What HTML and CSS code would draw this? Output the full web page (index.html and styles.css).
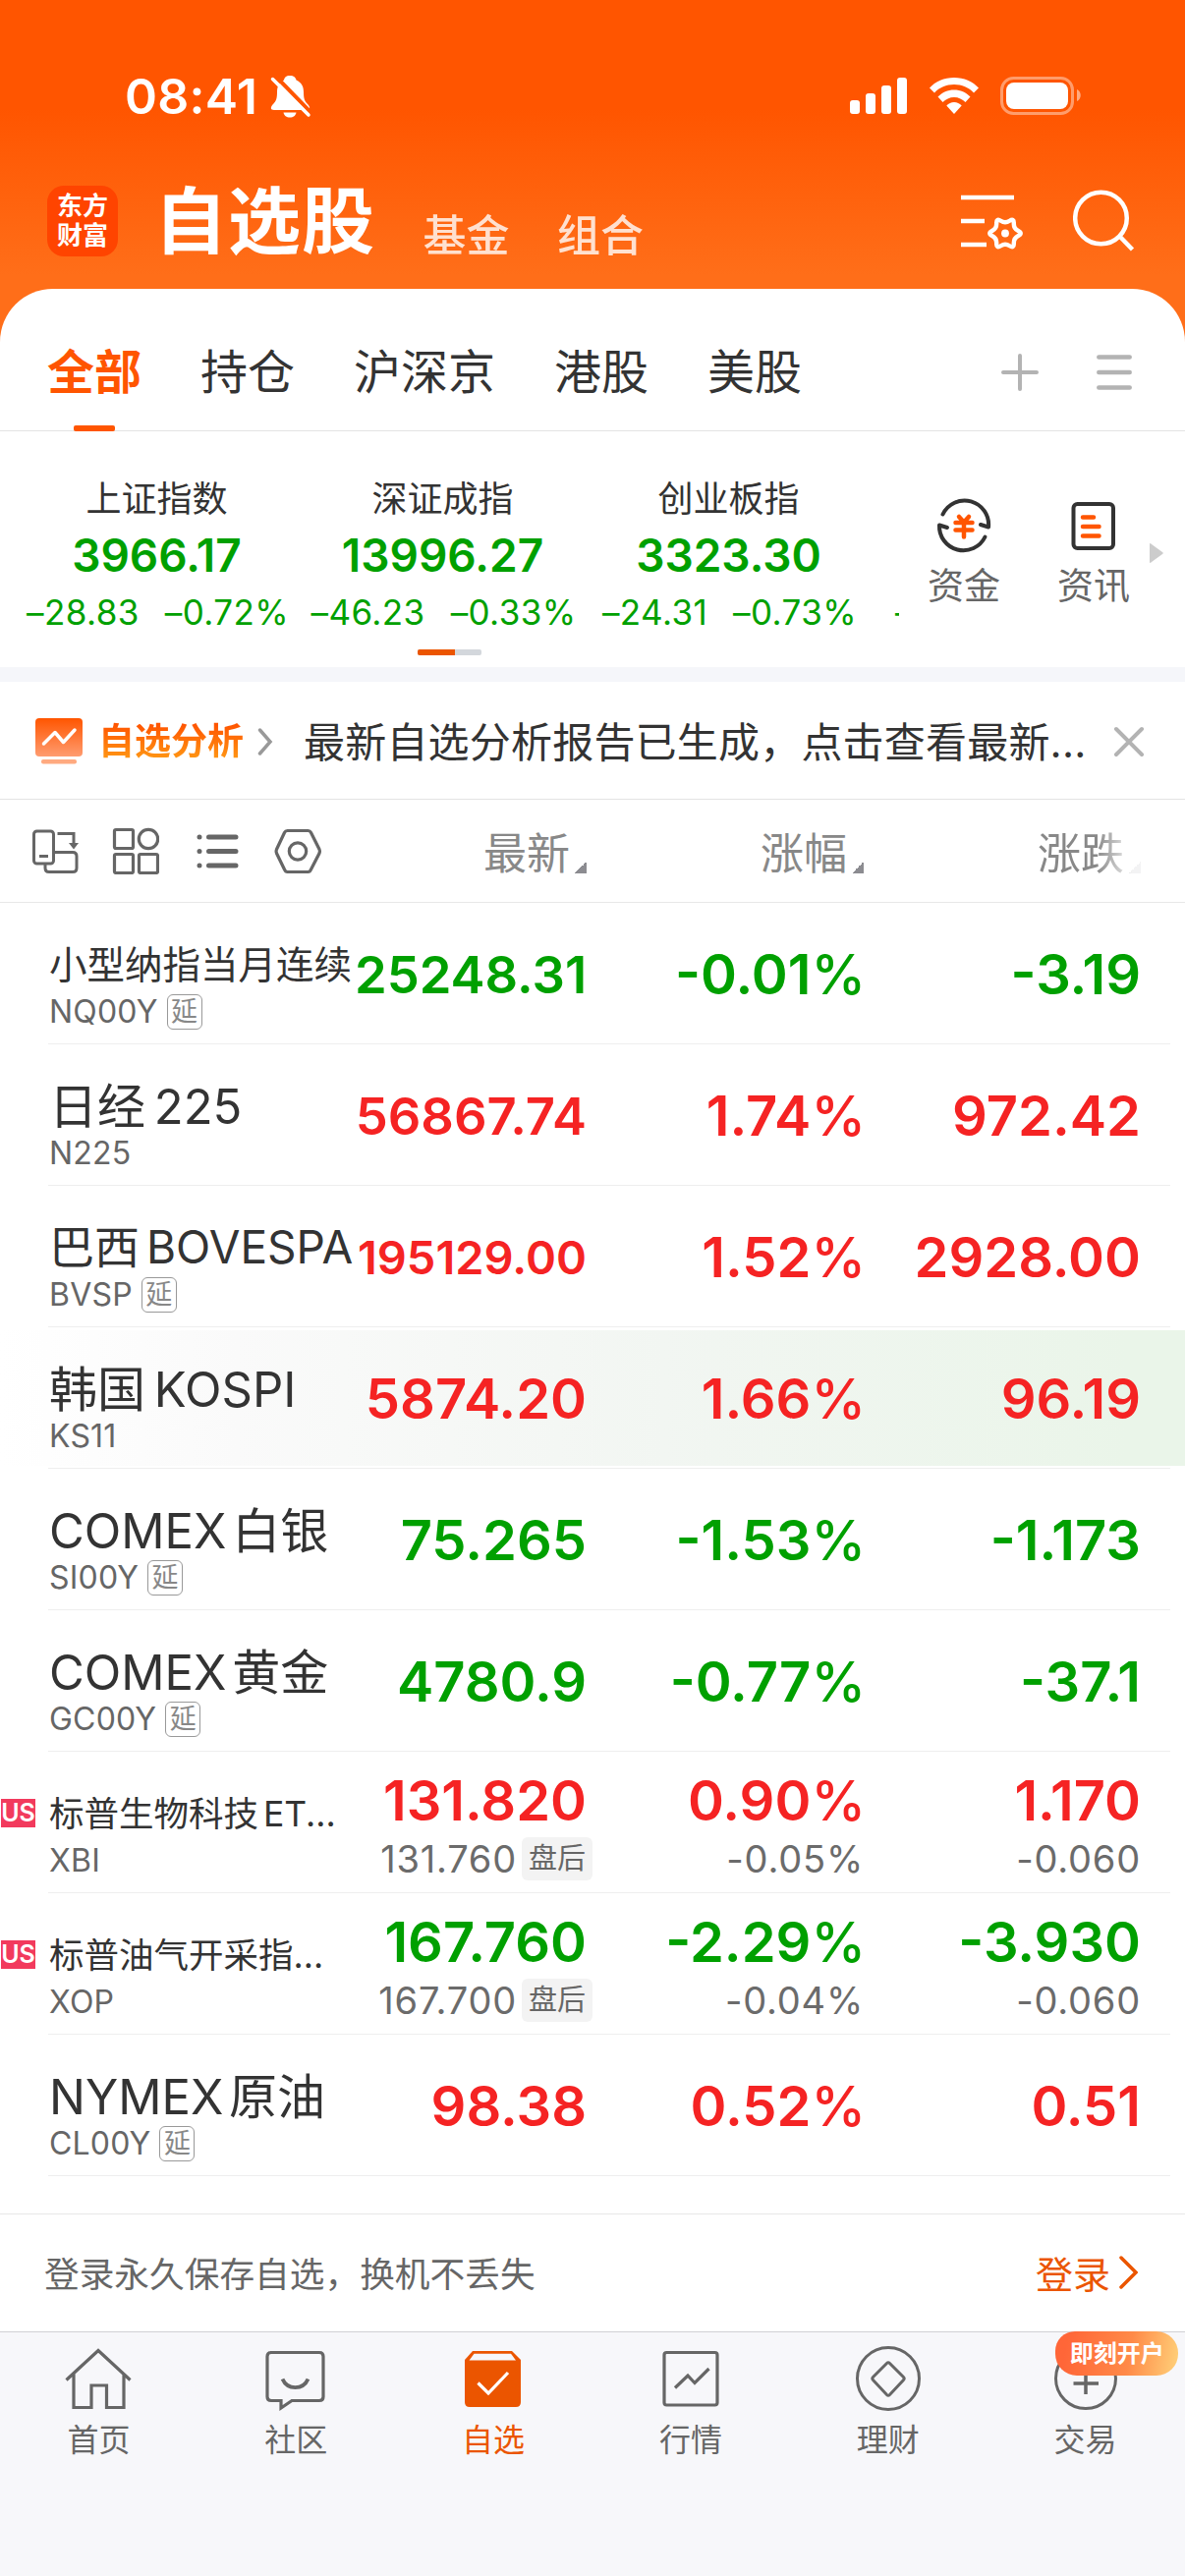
FILE: index.html
```html
<!DOCTYPE html>
<html lang="zh-CN">
<head>
    <meta charset="UTF-8">
    <meta name="viewport" content="width=device-width, initial-scale=1.0">
    <title>自选股</title>
    <link rel="stylesheet" href="styles.css">
</head>
<body>
<div class="app">
    <div class="status">
        <span class="time">08:41</span>
        <svg class="bell" width="42" height="44" viewBox="0 0 42 44">
            <path d="M20 1c4 0 6 2 6.500 4.500C32 8 34 12 34 18c0 6 1 9 4 12s3 6-1 6H4c-4 0-4-3-1-6s4-6 4-12c0-6 2-10 7-12.500C14.500 3 16 1 20 1z" fill="#fff"/>
            <path d="M13.500 38.500h13c-.5 3-3 5-6.500 5s-6-2-6.500-5z" fill="#fff"/>
            <path d="M4 0L42 39" stroke="#ff5500" stroke-width="4"/>
            <path d="M2.500 4.500L39 41" stroke="#fff" stroke-width="3.500" stroke-linecap="round"/>
        </svg>
        <div class="status-right">
            <svg width="58" height="38" viewBox="0 0 58 38" fill="#fff">
                <rect x="0" y="23" width="10" height="14" rx="3"/>
                <rect x="16" y="16" width="10" height="21" rx="3"/>
                <rect x="32" y="8" width="10" height="29" rx="3"/>
                <rect x="48" y="0" width="10" height="37" rx="3"/>
            </svg>
            <svg class="wifi" width="50" height="38" viewBox="0 0 50 38" fill="#fff">
                <path d="M25 0C35 0 44 4 50 10.500l-5 5C40 10 33 7 25 7S10 10 5 15.500l-5-5C6 4 15 0 25 0z"/>
                <path d="M25 12.500c6.500 0 12 2.500 16.500 7l-5 5.500c-3-3-7-5-11.500-5s-8.500 2-11.500 5l-5-5.500c4.500-4.500 10-7 16.500-7z"/>
                <path d="M25 25c3 0 5.500 1.500 7.700 3.500L25 37l-7.700-8.500C19.500 26.500 22 25 25 25z"/>
            </svg>
            <svg width="82" height="39" viewBox="0 0 82 39">
                <rect x="1.500" y="1.500" width="72" height="36" rx="12" fill="none" stroke="#fff" stroke-opacity=".42" stroke-width="3"/>
                <rect x="6" y="6" width="63" height="27" rx="8" fill="#fff"/>
                <path d="M78 13c5 2 5 10 0 12z" fill="#fff" fill-opacity=".5"/>
            </svg>
        </div>
    </div>

    <div class="nav">
        <div class="logo"><span>东方</span><span>财富</span></div>
        <h1>自选股</h1>
        <span class="nav-link">基金</span>
        <span class="nav-link">组合</span>
        <div class="nav-icons">
            <svg width="64" height="60" viewBox="0 0 64 60" fill="none" stroke="#fff" stroke-width="4.500">
                <path d="M0 6h54M0 30h24M0 54h26"/>
                <g transform="translate(45 42.500) scale(.98)">
                    <path d="M13.600 2.500Q8.700 5 9 10.500Q9.200 16 4.600 13Q0 10-4.600 13Q-9.200 16-9 10.500Q-8.700 5-13.600 2.500Q-18.500 0-13.600-2.500Q-8.700-5-9-10.500Q-9.200-16-4.600-13Q0-10 4.600-13Q9.200-16 9-10.500Q8.700-5 13.600-2.500Q18.500 0 13.600 2.500z"/>
                    <circle r="4" fill="#fff" stroke="none"/>
                </g>
            </svg>
            <svg width="64" height="64" viewBox="0 0 64 64" fill="none" stroke="#fff" stroke-width="4.500">
                <circle cx="28.500" cy="29" r="26.300"/>
                <path d="M47.500 47.500L60.500 61"/>
            </svg>
        </div>
    </div>

    <div class="panel">
        <div class="tabs">
            <span class="tab active">全部</span>
            <span class="tab">持仓</span>
            <span class="tab">沪深京</span>
            <span class="tab">港股</span>
            <span class="tab">美股</span>
            <div class="tab-icons">
                <svg width="40" height="40" viewBox="0 0 40 40" stroke="#b3b3b3" stroke-width="4" stroke-linecap="round">
                    <path d="M3 20h34M20 3v34"/>
                </svg>
                <svg width="36" height="40" viewBox="0 0 36 40" stroke="#b3b3b3" stroke-width="4.500" stroke-linecap="round">
                    <path d="M2.300 4.500h31.400M2.300 20h31.400M2.300 35.500h31.400"/>
                </svg>
            </div>
        </div>

        <div class="market">
            <div class="indices">
                <div class="index-row">
                    <div class="index">
                        <div class="index-name">上证指数</div>
                        <div class="index-value">3966.17</div>
                        <div class="index-change"><span>–28.83</span><span>–0.72%</span></div>
                    </div>
                    <div class="index">
                        <div class="index-name">深证成指</div>
                        <div class="index-value">13996.27</div>
                        <div class="index-change"><span>–46.23</span><span>–0.33%</span></div>
                    </div>
                    <div class="index">
                        <div class="index-name">创业板指</div>
                        <div class="index-value">3323.30</div>
                        <div class="index-change"><span>–24.31</span><span>–0.73%</span></div>
                    </div>
                    <div class="index next"><span>–</span></div>
                </div>
                <div class="pager"><i></i></div>
            </div>
            <div class="shortcut">
                <svg width="60" height="60" viewBox="-30 -30 60 60" fill="none" stroke="#333" stroke-width="4" stroke-linecap="round" stroke-linejoin="round">
                    <path d="M-21.500-11.500A24.500 24.500 0 0 1 25 1.500L17-1"/>
                    <path d="M21.500 11.500A24.500 24.500 0 0 1-25-.5L-17 2"/>
                    <path d="M-5-9L0-3.500L5-9M-8.500-3h17M-8.500 4.500h17M0-3v14.500" stroke="#ff5500" stroke-width="4.500"/>
                </svg>
                <span>资金</span>
            </div>
            <div class="shortcut">
                <svg width="60" height="60" viewBox="0 0 60 60" fill="none" stroke-linecap="round">
                    <rect x="9.500" y="8" width="40.500" height="45" rx="4" stroke="#333" stroke-width="4"/>
                    <path d="M19 21.500h11M19 31h16.500M19 40.500h16.500" stroke="#ff5500" stroke-width="4.500"/>
                </svg>
                <span>资讯</span>
            </div>
            <svg class="more" width="14" height="20" viewBox="0 0 14 20"><path d="M0 1q0-2 2 0l11 8q1.500 1 0 2L2 19q-2 2-2 0z" fill="#ccc"/></svg>
        </div>

        <div class="analysis">
            <svg width="48" height="48" viewBox="0 0 48 48">
                <defs>
                    <linearGradient id="g1" x1="0" y1="0" x2="0" y2="1">
                        <stop offset="0" stop-color="#ff5500"/>
                        <stop offset="1" stop-color="#ff9c70"/>
                    </linearGradient>
                </defs>
                <rect width="48" height="39" rx="4" fill="url(#g1)"/>
                <rect x="6" y="42" width="36" height="4.500" rx="2" fill="#ffaa80"/>
                <path d="M8.500 26L20 14.500L28.500 24.500L40 12" fill="none" stroke="#fff" stroke-width="3.500" stroke-linecap="round" stroke-linejoin="round"/>
            </svg>
            <b class="analysis-title">自选分析</b>
            <svg class="chev" width="16" height="30" viewBox="0 0 16 30" fill="none" stroke="#999" stroke-width="3.500" stroke-linecap="round"><path d="M2.500 3L13 15L2.500 27"/></svg>
            <span class="analysis-text">最新自选分析报告已生成，点击查看最新...</span>
            <svg class="close" width="32" height="32" viewBox="0 0 32 32" stroke="#b3b3b3" stroke-width="4" stroke-linecap="round"><path d="M3 3l26 26M29 3L3 29"/></svg>
        </div>

        <div class="grid table-head">
            <div class="tools">
                <svg width="48" height="48" viewBox="0 0 48 48" fill="none" stroke="#666" stroke-width="3">
                    <rect x="2.500" y="4" width="20" height="33" rx="3"/>
                    <path d="M8 29.500h9M26.500 6.500H43V17M22.500 25.500H42q4 0 4 4v12q0 4-4 4H18q-4 0-4-4v-4.500"/>
                    <path d="M38 16h10l-5 6.500z" fill="#666" stroke="none"/>
                </svg>
                <svg width="48" height="48" viewBox="0 0 48 48" fill="none" stroke="#666" stroke-width="3.200">
                    <rect x="2.500" y="2.500" width="19" height="19" rx="1.500"/>
                    <circle cx="37" cy="12" r="9.700"/>
                    <rect x="2.500" y="27.500" width="19" height="19" rx="1.500"/>
                    <rect x="27.500" y="27.500" width="19" height="19" rx="1.500"/>
                </svg>
                <svg width="48" height="48" viewBox="0 0 48 48" fill="none" stroke="#666" stroke-width="5" stroke-linecap="round">
                    <path d="M6 10h0M6 24.500h0M6 39h0M15.500 10H43M15.500 24.500H43M15.500 39H43"/>
                </svg>
                <svg width="48" height="48" viewBox="0 0 48 48" fill="none" stroke="#666" stroke-width="3.200">
                    <path d="M13.500 3.500h21q2 0 3 2L46 22.500q.8 2 0 4L37.500 43q-1 2.500-3 2.500h-21q-2 0-3-2.500L2.500 26.500q-.8-2 0-4L10.500 5.500q1-2 3-2z"/>
                    <circle cx="24" cy="24.500" r="8.700"/>
                </svg>
            </div>
            <div class="col">最新<i></i></div>
            <div class="col">涨幅<i></i></div>
            <div class="col faded">涨跌<i></i></div>
        </div>

        <div class="grid row down">
            <div class="name"><div class="title t38">小型纳指当月连续</div><div class="code">NQ00Y<em>延</em></div></div>
            <div class="val p53">25248.31</div>
            <div class="val">-0.01<span class="pct">%</span></div>
            <div class="val">-3.19</div>
        </div>
        <div class="grid row up">
            <div class="name"><div class="title">日经 225</div><div class="code">N225</div></div>
            <div class="val p53">56867.74</div>
            <div class="val">1.74<span class="pct">%</span></div>
            <div class="val">972.42</div>
        </div>
        <div class="grid row up">
            <div class="name"><div class="title t46">巴西 BOVESPA</div><div class="code">BVSP<em>延</em></div></div>
            <div class="val p47">195129.00</div>
            <div class="val">1.52<span class="pct">%</span></div>
            <div class="val">2928.00</div>
        </div>
        <div class="grid row up flash">
            <div class="name"><div class="title">韩国 KOSPI</div><div class="code">KS11</div></div>
            <div class="val">5874.20</div>
            <div class="val">1.66<span class="pct">%</span></div>
            <div class="val">96.19</div>
        </div>
        <div class="grid row down">
            <div class="name"><div class="title tight">COMEX 白银</div><div class="code">SI00Y<em>延</em></div></div>
            <div class="val">75.265</div>
            <div class="val">-1.53<span class="pct">%</span></div>
            <div class="val">-1.173</div>
        </div>
        <div class="grid row down">
            <div class="name"><div class="title tight">COMEX 黄金</div><div class="code">GC00Y<em>延</em></div></div>
            <div class="val">4780.9</div>
            <div class="val">-0.77<span class="pct">%</span></div>
            <div class="val">-37.1</div>
        </div>
        <div class="grid row up double">
            <div class="name"><span class="us">US</span><div class="title t36">标普生物科技 ET...</div><div class="code">XBI</div></div>
            <div class="val">131.820<div class="sub">131.760<em>盘后</em></div></div>
            <div class="val">0.90<span class="pct">%</span><div class="sub">-0.05%</div></div>
            <div class="val">1.170<div class="sub">-0.060</div></div>
        </div>
        <div class="grid row down double">
            <div class="name"><span class="us">US</span><div class="title t36">标普油气开采指...</div><div class="code">XOP</div></div>
            <div class="val">167.760<div class="sub">167.700<em>盘后</em></div></div>
            <div class="val">-2.29<span class="pct">%</span><div class="sub">-0.04%</div></div>
            <div class="val">-3.930<div class="sub">-0.060</div></div>
        </div>
        <div class="grid row up">
            <div class="name"><div class="title tight">NYMEX 原油</div><div class="code">CL00Y<em>延</em></div></div>
            <div class="val">98.38</div>
            <div class="val">0.52<span class="pct">%</span></div>
            <div class="val">0.51</div>
        </div>
    </div>

    <div class="login">
        <span>登录永久保存自选，换机不丢失</span>
        <a class="login-link">登录
            <svg width="20" height="36" viewBox="0 0 20 36" fill="none" stroke="#eb5500" stroke-width="3.500" stroke-linecap="round"><path d="M3 3L18 18L3 33"/></svg>
        </a>
    </div>

    <div class="tabbar">
        <div class="item">
            <svg width="68" height="66" viewBox="0 0 68 66" fill="none" stroke="#666" stroke-width="3.200">
                <path d="M1.500 34.500L34 4.500L66.500 34.500M9 28v34.500h18V40h15.500v22.500H60V28"/>
            </svg>
            <span>首页</span>
        </div>
        <div class="item">
            <svg width="68" height="66" viewBox="0 0 68 66" fill="none" stroke="#666" stroke-width="3.200">
                <path d="M8 6.500h50q4 0 4 4v41q0 4-4 4H30L19 63v-7.500H9q-4 0-4-4v-41q0-4 4-4z"/>
                <path d="M20.500 33.500c5 11.500 21 11.500 26 0" stroke-width="3.800"/>
            </svg>
            <span>社区</span>
        </div>
        <div class="item current">
            <svg width="68" height="66" viewBox="0 0 68 66">
                <path d="M13 5h40l9 9v43q0 5-5 5H10q-5 0-5-5V14z" fill="#eb5500"/>
                <path d="M14.500 7.800h37.500l5 6.700H9.500z" fill="#f7f7fa"/>
                <path d="M18.500 37.500L29 48L49 27" fill="none" stroke="#fff" stroke-width="3.200"/>
            </svg>
            <span>自选</span>
        </div>
        <div class="item">
            <svg width="68" height="66" viewBox="0 0 68 66" fill="none" stroke="#666" stroke-width="3.200">
                <rect x="7" y="6.500" width="54" height="53.500" rx="2.500"/>
                <path d="M18 42.500L31 30l7 7.500L52.500 23"/>
            </svg>
            <span>行情</span>
        </div>
        <div class="item">
            <svg width="68" height="66" viewBox="0 0 68 66" fill="none" stroke="#666" stroke-width="3">
                <circle cx="34" cy="33" r="31.500"/>
                <path d="M32.500 17.500q1.500-1.500 3 0L49.500 31.500q1.500 1.500 0 3L35.500 49.500q-1.500 1.500-3 0L18.500 34.500q-1.500-1.500 0-3z"/>
            </svg>
            <span>理财</span>
        </div>
        <div class="item">
            <svg width="68" height="66" viewBox="0 0 68 66" fill="none" stroke="#666" stroke-width="3">
                <circle cx="34" cy="33" r="30.500"/>
                <path d="M21.500 38H47M34 24v25" stroke-width="3.500"/>
            </svg>
            <span>交易</span>
            <b class="promo">即刻开户</b>
        </div>
    </div>
</div>
</body>
</html>
```
FILE: styles.css
```css
* {
    margin: 0;
    padding: 0;
    box-sizing: border-box;
}

body {
    font-family: Inter, "Noto Sans CJK SC", sans-serif;
    color: #333;
    background: #fff;
}

svg {
    display: block;
    flex: none;
}

i, em {
    font-style: normal;
}

.app {
    width: 1206px;
    height: 2622px;
    display: flex;
    flex-direction: column;
    overflow: hidden;
    background: linear-gradient(#ff5500 0, #ff5500 110px, #ff6e19 280px) no-repeat;
    background-size: 100% 400px;
}

/* status bar */
.status {
    height: 155px;
    padding: 40px 106px 0 127px;
    display: flex;
    align-items: center;
    color: #fff;
}

.time {
    font-size: 50px;
    font-weight: 600;
    line-height: 60px;
    letter-spacing: .3px;
    width: 148px;
}

.status-right {
    margin-left: auto;
    display: flex;
    align-items: center;
}

.wifi {
    margin: 0 22px 0 23px;
}

/* top navigation */
.nav {
    height: 139px;
    padding: 0 50px 0 48px;
    display: flex;
    align-items: center;
    color: #fff;
}

.logo {
    width: 72px;
    height: 72px;
    border-radius: 17px;
    background: #ff4400;
    display: flex;
    flex-direction: column;
    align-items: center;
    justify-content: center;
    font-size: 26px;
    font-weight: 700;
    line-height: 30px;
}

h1 {
    margin-left: 37px;
    font-size: 74px;
    font-weight: 700;
    line-height: 90px;
    letter-spacing: 1px;
}

.nav-link {
    padding-top: 30px;
    font-size: 44px;
    font-weight: 500;
    line-height: 50px;
    opacity: .8;
    margin-left: 48.500px;
}

.nav-icons {
    margin-left: auto;
    display: flex;
    align-items: center;
    gap: 50px;
}

/* white panel */
.panel {
    height: 1959px;
    background: #fff;
    border-radius: 54px 54px 0 0;
}

.tabs {
    height: 145px;
    padding: 25px 54px 0 48px;
    display: flex;
    gap: 60px;
    border-bottom: 1px solid #e3e3e3;
    font-size: 48px;
    line-height: 119px;
}

.tab.active {
    position: relative;
    color: #ff5500;
    font-weight: 700;
}

.tab.active::after {
    content: "";
    position: absolute;
    left: 27px;
    bottom: -1px;
    width: 42px;
    height: 6px;
    border-radius: 2px;
    background: #ff5500;
}

.tab-icons {
    margin-left: auto;
    display: flex;
    align-items: center;
    gap: 58px;
}

/* index strip */
.market {
    height: 255px;
    display: flex;
    border-bottom: 15px solid #f5f6fa;
}

.indices {
    width: 915px;
    overflow: hidden;
}

.index-row {
    height: 222px;
    padding: 43px 0 0 14px;
    display: flex;
}

.index {
    flex: none;
    width: 291px;
    text-align: center;
}

.index-name {
    font-size: 36px;
    line-height: 52px;
    height: 50px;
}

.index-value {
    font-size: 46px;
    font-weight: 600;
    line-height: 66px;
    color: #00a000;
}

.index-change {
    display: flex;
    justify-content: center;
    gap: 26px;
    padding-left: 2px;
    font-size: 35px;
    line-height: 51px;
    letter-spacing: .4px;
    color: #00a000;
}

.index.next {
    padding: 116px 0 0 24px;
    text-align: left;
    font-size: 35px;
    line-height: 51px;
    color: #00a000;
}

.pager {
    width: 65px;
    height: 6px;
    margin: 0 auto;
    border-radius: 2px;
    background: #d3d7dc;
    overflow: hidden;
}

.pager i {
    display: block;
    width: 38px;
    height: 6px;
    background: #eb5500;
}

.shortcut {
    width: 132px;
    padding-top: 66px;
    display: flex;
    flex-direction: column;
    align-items: center;
    font-size: 37px;
    line-height: 63px;
    color: #666;
}

.more {
    margin: 114px 0 0 -9px;
}

/* analysis notice */
.analysis {
    height: 120px;
    padding: 2px 41px 0 36px;
    display: flex;
    align-items: center;
    border-bottom: 1px solid #e3e3e3;
}

.analysis-title {
    margin-left: 16px;
    font-size: 37px;
    line-height: 50px;
    background: linear-gradient(#ff5500 15%, #ff9614 85%);
    -webkit-background-clip: text;
    background-clip: text;
    color: transparent;
}

.chev {
    margin-left: 14px;
}

.analysis-text {
    margin-left: 31px;
    padding-top: 2px;
    font-size: 42px;
    line-height: 50px;
    letter-spacing: .2px;
    white-space: nowrap;
}

.close {
    margin-left: auto;
}

/* quote table */
.grid {
    display: grid;
    grid-template-columns: 361px 236px 282px 282px;
}

.table-head {
    height: 105px;
    border-bottom: 1px solid #e8e8e8;
    align-items: center;
}

.tools {
    padding-left: 31.500px;
    display: flex;
    gap: 34.500px;
}

.col {
    display: flex;
    justify-content: flex-end;
    align-items: center;
    gap: 5px;
    padding-top: 5px;
    font-size: 44px;
    line-height: 60px;
    color: #888;
}

.col i {
    width: 12px;
    height: 12px;
    margin-top: 28px;
    background: linear-gradient(135deg, transparent 50%, #8c8c91 50%);
}

.faded {
    -webkit-mask-image: linear-gradient(90deg, #000 84%, rgba(0, 0, 0, .1) 97%);
    mask-image: linear-gradient(90deg, #000 84%, rgba(0, 0, 0, .1) 97%);
}

.row {
    height: 144px;
    background: linear-gradient(#eee, #eee) 49px 100% / 1142px 1px no-repeat;
}

.flash {
    background:
        linear-gradient(#eee, #eee) 49px 100% / 1142px 1px no-repeat,
        linear-gradient(90deg, #fff 0, #fafafa 20%, #f2f6f2 56%, #eaf5e9 95%) 0 3px / 100% 138px no-repeat;
}

.name {
    position: relative;
    padding: 37px 0 0 50px;
    white-space: nowrap;
}

.title {
    height: 52px;
    font-size: 49px;
    line-height: 53px;
    word-spacing: -5px;
}

.tight {
    word-spacing: -8px;
}

.t46 {
    font-size: 46px;
    line-height: 51px;
    word-spacing: -6px;
}

.t38 {
    font-size: 38.500px;
}

.t36 {
    font-size: 35.500px;
}

.code {
    display: flex;
    align-items: center;
    gap: 9px;
    font-size: 32px;
    line-height: 44px;
    letter-spacing: .2px;
    color: #666;
}

.code em {
    width: 36px;
    height: 36px;
    border: 1.500px solid #999;
    border-radius: 6px;
    font-size: 27px;
    line-height: 33px;
    text-align: center;
    color: #888;
}

/* market badge sits in the left gutter */
.us {
    position: absolute;
    left: 1px;
    top: 48px;
    width: 35px;
    height: 29px;
    background: #f23a5d;
    color: #fff;
    font-size: 25px;
    font-weight: 600;
    line-height: 29px;
    text-align: center;
}

.val {
    line-height: 146px;
    font-size: 56px;
    font-weight: 600;
    text-align: right;
    white-space: nowrap;
}

.pct {
    margin-right: -2px;
    font-weight: 500;
}

.p53 {
    font-size: 52.500px;
}

.p47 {
    font-size: 47px;
}

.up .val {
    color: #f52323;
}

.down .val {
    color: #00a000;
}

.double .val {
    padding-top: 20px;
    line-height: 60px;
}

.row .sub {
    display: flex;
    justify-content: flex-end;
    align-items: center;
    font-size: 38px;
    font-weight: 400;
    line-height: 58px;
    letter-spacing: .8px;
    color: #6b6b6b;
}

.sub em {
    width: 72px;
    height: 44px;
    margin: 0 -6px 0 5px;
    border-radius: 6px;
    background: #f3f3f3;
    font-size: 29px;
    line-height: 44px;
    letter-spacing: 0;
    text-align: center;
    color: #666;
}

/* login bar */
.login {
    height: 120px;
    padding: 0 48px 2px 45px;
    display: flex;
    align-items: center;
    justify-content: space-between;
    background: #fff;
    border-top: 1px solid #e8e8e8;
    font-size: 35.700px;
    color: #666;
}

.login-link {
    display: flex;
    align-items: center;
    gap: 8px;
    font-size: 38px;
    color: #eb5500;
}

/* bottom tab bar */
.tabbar {
    height: 249px;
    padding: 14px 1px 0 0;
    display: grid;
    grid-template-columns: repeat(6, 1fr);
    background: #f7f7fa;
    border-top: 1px solid #d0d0d4;
}

.item {
    position: relative;
    display: flex;
    flex-direction: column;
    align-items: center;
    gap: 8px;
    font-size: 32px;
    line-height: 44px;
    color: #666;
}

.current {
    color: #eb5500;
}

.promo {
    position: absolute;
    left: 70px;
    top: -15px;
    width: 125px;
    height: 45px;
    border-radius: 20px 22px 22px 22px;
    background: linear-gradient(100deg, #ff6638 10%, #ff8a48 60%, #ffd27a 100%);
    color: #fff;
    font-size: 24px;
    line-height: 45px;
    text-align: center;
}
```
